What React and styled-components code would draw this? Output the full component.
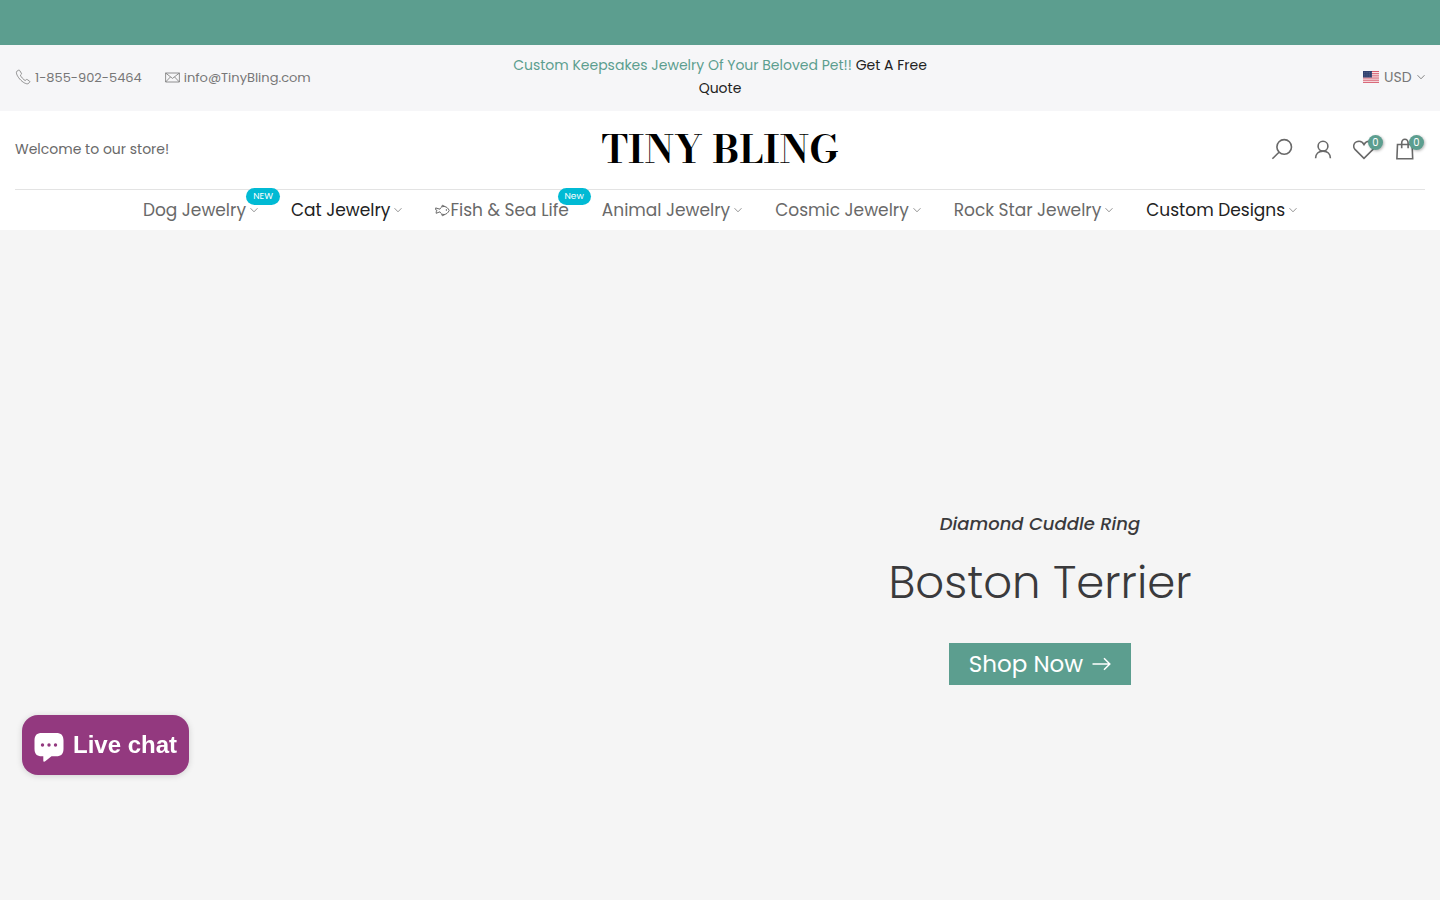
import React from "react";
import styled, { createGlobalStyle } from "styled-components";

const GlobalStyle = createGlobalStyle`
  *, *::before, *::after {
    box-sizing: border-box;
  }
  body {
    margin: 0;
    background: #f5f5f5;
    color: #696969;
    font-family: Poppins, Inter, "Open Sans", sans-serif;
    font-size: 14px;
    line-height: 23px;
  }
  a {
    color: inherit;
    text-decoration: none;
  }
  button, select {
    font: inherit;
    color: inherit;
    border: 0;
    padding: 0;
    background: none;
    cursor: pointer;
  }
`;

const menu = [
  { label: "Dog Jewelry", badge: "NEW", arrow: true },
  { label: "Cat Jewelry", dark: true, arrow: true },
  { label: "Fish & Sea Life", badge: "New", fish: true },
  { label: "Animal Jewelry", arrow: true },
  { label: "Cosmic Jewelry", arrow: true },
  { label: "Rock Star Jewelry", arrow: true },
  { label: "Custom Designs", dark: true, arrow: true },
];

const PhoneIcon = () => (
  <Icon width="16" height="16" viewBox="0 0 16 16" $stroke={0.8}>
    <path d="M3.6 1.2 1.8 2.3C.8 3.2 1.6 6.400 4.700 10s6.800 5.300 8.300 4.700l1.700-1.500c.3-.4.2-.8-.2-1.100l-2.200-1.500c-.4-.3-.8-.2-1.100.1l-1 .8C9 11.200 5.700 7.600 5.400 6.200l.9-.9c.3-.3.3-.6.1-1L4.700 1.500c-.3-.4-.7-.5-1.100-.3z" />
  </Icon>
);

const MailIcon = () => (
  <Icon width="15" height="16" viewBox="0 0 15 16" $stroke={0.8}>
    <path d="M.6 4h13.800v9H.6zM.6 4l6.900 5.400L14.400 4M.6 13l4.900-5.100M14.400 13 9.500 7.900" />
  </Icon>
);

const FlagIcon = () => (
  <svg width="16" height="12" viewBox="0 0 16 12" aria-hidden="true">
    <path fill="#fff" d="M0 0h16v12H0z" />
    <path stroke="#d0485c" strokeWidth=".9" d="M0 .5h16M0 2.350h16M0 4.200h16M0 6.050h16M0 7.900h16M0 9.750h16M0 11.600h16" />
    <path fill="#31416f" d="M0 0h9v6.500H0z" />
    <path stroke="#8d97b3" strokeWidth=".5" strokeDasharray=".6 1.200" d="M1 1.500h8M1 3.200h8M1 5h8" />
  </svg>
);

const Chevron = ({ size = 8 }) => (
  <Icon width={size} height={size} viewBox="0 0 8 8" $stroke={0.9}>
    <path d="m.5 2.200 3.500 3.600 3.500-3.600" />
  </Icon>
);

const FishIcon = () => (
  <Icon width="15" height="13" viewBox="0 0 15 13" $stroke={1}>
    <path d="M4.900 5.200C5.500 3.300 7.300 2.300 9.300 2.500c2.400.2 4 1.900 4.900 4-1.100 2.300-2.800 3.800-5 4-2 .1-3.600-.9-4.300-2.700L1.200 9.300V7.500l1-.9-1.500-.8V3.900zM6.800 3.100l.5-1.900 3 1.500M6.800 10l.5 1.800 2.800-1.400" />
    <circle cx="11.300" cy="6" r=".4" />
  </Icon>
);

const SearchIcon = () => (
  <Icon width="22" height="22" viewBox="0 0 22 22" $stroke={1.6}>
    <circle cx="13.200" cy="8.900" r="7.300" />
    <path d="M8 14.300 1.400 20.800" />
  </Icon>
);

const UserIcon = () => (
  <Icon width="22" height="22" viewBox="0 0 22 22" $stroke={1.6}>
    <circle cx="11" cy="8.200" r="4.900" />
    <path d="M3.600 20.200c0-4.400 3-7.100 7.400-7.100s7.400 2.700 7.400 7.100" />
  </Icon>
);

const HeartIcon = () => (
  <Icon width="22" height="22" viewBox="0 0 22 22" $stroke={1.6}>
    <path d="M11 20.400 2 11.400C-.3 8.900.6 5.200 3.300 3.900 6.300 2.500 9.500 3.700 11 6.500c1.500-2.800 4.700-4 7.700-2.600 2.700 1.300 3.600 5 1.300 7.500z" />
  </Icon>
);

const BagIcon = () => (
  <Icon width="22" height="22" viewBox="0 0 22 22" $stroke={1.6}>
    <path d="M3.500 6.500h14.600l.6 14.200H2.900zM7.700 10.300V5a3.200 3.700 0 0 1 6.400 0v5.300" />
  </Icon>
);

const ArrowIcon = () => (
  <Icon width="19" height="16" viewBox="0 0 19 16" $stroke={1.5}>
    <path d="M.5 8h17M12 2.200 17.800 8 12 13.800" />
  </Icon>
);

const ChatIcon = () => (
  <svg width="30" height="30" viewBox="0 0 30 30" aria-hidden="true">
    <path
      fill="#fff"
      d="M8 1h14c5.400 0 7.500 2.400 7.500 7.500v8.300c0 5.100-2.100 7.500-7.500 7.500h-4.500l-6.300 5c-1 .8-1.900.4-1.900-.8v-4.200H8C2.600 24.300.5 21.900.5 16.800V8.500C.5 3.400 2.600 1 8 1z"
    />
    <circle cx="8.500" cy="13" r="1.700" fill="#93397f" />
    <circle cx="15" cy="13" r="1.700" fill="#93397f" />
    <circle cx="21.500" cy="13" r="1.700" fill="#93397f" />
  </svg>
);

const TopBar = () => (
  <TopBarWrapper>
    <Contacts>
      <ContactLink href="tel:+18559025464">
        <PhoneIcon />
        1-855-902-5464
      </ContactLink>
      <ContactLink href="mailto:info@TinyBling.com">
        <MailIcon />
        info@TinyBling.com
      </ContactLink>
    </Contacts>
    <Promo>
      Custom Keepsakes Jewelry Of Your Beloved Pet!! <a href="#quote">Get A Free Quote</a>
    </Promo>
    <Currency>
      <FlagIcon />
      <select aria-label="Currency" defaultValue="USD">
        <option>USD</option>
      </select>
      <Chevron />
    </Currency>
  </TopBarWrapper>
);

const Header = () => (
  <HeaderWrapper>
    <HeaderRow>
      <span>Welcome to our store!</span>
      <Logo href="#home">TINY BLING</Logo>
      <Actions>
        <IconButton aria-label="Search">
          <SearchIcon />
        </IconButton>
        <IconButton aria-label="Account">
          <UserIcon />
        </IconButton>
        <IconButton aria-label="Wishlist">
          <HeartIcon />
          <Count>0</Count>
        </IconButton>
        <IconButton aria-label="Cart">
          <BagIcon />
          <Count>0</Count>
        </IconButton>
      </Actions>
    </HeaderRow>
    <Nav>
      {menu.map((item) => (
        <NavLink key={item.label} href="#shop" $dark={item.dark}>
          {item.fish && <FishIcon />}
          {item.label}
          {item.arrow && <Arrow><Chevron /></Arrow>}
          {item.badge && <Badge>{item.badge}</Badge>}
        </NavLink>
      ))}
    </Nav>
  </HeaderWrapper>
);

export default function App() {
  return (
    <Page>
      <GlobalStyle />
      <Announcement />
      <TopBar />
      <Header />
      <Hero>
        <HeroContent>
          <HeroNote>Diamond Cuddle Ring</HeroNote>
          <HeroTitle>Boston Terrier</HeroTitle>
          <ShopLink href="#boston-terrier">
            Shop Now
            <ArrowIcon />
          </ShopLink>
        </HeroContent>
      </Hero>
      <ChatButton>
        <ChatIcon />
        Live chat
      </ChatButton>
    </Page>
  );
}

const Page = styled.div`
  display: flex;
  flex-direction: column;
  min-height: 100vh;
`;

const Icon = styled.svg.attrs({ "aria-hidden": true })`
  flex: none;
  fill: none;
  stroke: currentColor;
  stroke-width: ${(props) => props.$stroke};
`;

const Announcement = styled.div`
  height: 45px;
  background: #5c9e8f;
`;

const TopBarWrapper = styled.div`
  display: grid;
  grid-template-columns: 1fr 1fr 1fr;
  align-items: center;
  column-gap: 30px;
  padding: 9px 15px 11px;
  background: #f6f6f8;
  color: #777;
`;

const Contacts = styled.div`
  display: flex;
  gap: 23px;
  font-size: 13px;
`;

const ContactLink = styled.a`
  display: flex;
  align-items: center;
  gap: 4px;
`;

const Promo = styled.p`
  margin: 0;
  text-align: center;
  color: #5c9e8f;

  a {
    color: #222;
  }
`;

const Currency = styled.div`
  display: flex;
  align-items: center;
  justify-content: flex-end;
  gap: 5px;

  select {
    appearance: none;
  }
`;

const HeaderWrapper = styled.header`
  padding: 0 15px;
  background: #fff;
`;

const HeaderRow = styled.div`
  display: grid;
  grid-template-columns: 1fr auto 1fr;
  align-items: center;
  height: 79px;
  padding-bottom: 2px;
  border-bottom: 1px solid #e3e3e3;
`;

const Logo = styled.a`
  font-family: "Bodoni Moda", "Playfair Display", "Liberation Serif", serif;
  font-size: 38px;
  font-weight: 700;
  line-height: 48px;
  color: #000;
`;

const Actions = styled.div`
  display: flex;
  justify-content: flex-end;
  gap: 19px;
  padding-right: 9px;
`;

const IconButton = styled.button`
  position: relative;
  display: flex;
`;

const Count = styled.span`
  position: absolute;
  top: -3px;
  right: -8px;
  width: 15px;
  height: 15px;
  border-radius: 50%;
  background: #5c9e8f;
  box-shadow: 1px 1px 3px rgba(0, 0, 0, 0.3);
  color: #fff;
  font-size: 10px;
  line-height: 15px;
  text-align: center;
`;

const Nav = styled.nav`
  display: flex;
  justify-content: center;
  gap: 33px;
`;

const NavLink = styled.a`
  position: relative;
  display: flex;
  align-items: center;
  font-size: 17px;
  line-height: 40px;
  white-space: nowrap;
  color: ${(props) => (props.$dark ? "#222" : "#696969")};
`;

const Arrow = styled.span`
  display: flex;
  margin-left: 4px;
  color: #888;
`;

const Badge = styled.span`
  position: absolute;
  top: -2px;
  right: -22px;
  padding: 0 7px;
  border-radius: 9px;
  background: #01bad4;
  color: #fff;
  font-size: 9px;
  line-height: 17px;
`;

const Hero = styled.main`
  display: grid;
  grid-template-columns: 4fr 5fr;
  flex: 1;
  padding-top: 280px;
  background: #f5f5f5;
`;

const HeroContent = styled.div`
  grid-column: 2;
  display: flex;
  flex-direction: column;
  align-items: center;
  color: #3a3a3c;
`;

const HeroNote = styled.p`
  margin: 0;
  font-size: 18px;
  font-style: italic;
  font-weight: 500;
  line-height: 28px;
`;

const HeroTitle = styled.h1`
  margin: 17px 0 32px;
  font-size: 45px;
  font-weight: 300;
  line-height: 56px;
`;

const ShopLink = styled.a`
  display: flex;
  align-items: center;
  gap: 9px;
  padding: 0 20px;
  background: #5c9e8f;
  color: #fff;
  font-size: 23px;
  line-height: 42px;
`;

const ChatButton = styled.button`
  position: fixed;
  left: 22px;
  bottom: 125px;
  display: flex;
  align-items: center;
  gap: 9px;
  height: 60px;
  padding: 0 12px 2px;
  border-radius: 16px;
  background: #93397f;
  box-shadow: 0 1px 6px rgba(0, 0, 0, 0.15);
  color: #fff;
  font-family: "Liberation Sans", sans-serif;
  font-size: 24px;
  font-weight: 700;

  svg {
    margin-top: 6px;
  }
`;
